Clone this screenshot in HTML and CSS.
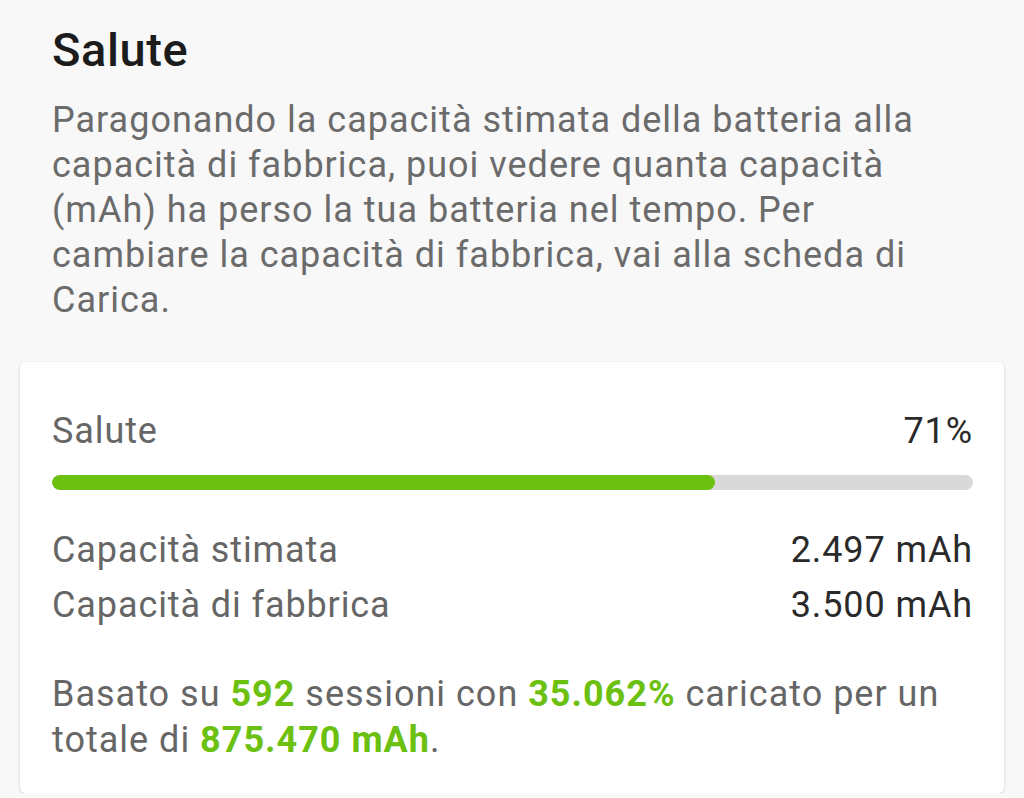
FILE: index.html
```html
<!DOCTYPE html>
<html>
  <head>
    <meta charset="UTF-8" />
    <title>Salute</title>
    <link rel="stylesheet" href="styles.css">
  </head>
  <body>
    <div class="intro">
      <h1>Salute</h1>
      <p>Paragonando la capacità stimata della batteria alla capacità di fabbrica, puoi vedere quanta capacità (mAh) ha perso la tua batteria nel tempo. Per cambiare la capacità di fabbrica, vai alla scheda di Carica.</p>
    </div>

    <div class="card">
      <div class="row head">
        <span class="label">Salute</span>
        <span class="value">71%</span>
      </div>
      <div class="bar">
        <div class="fill" style="width: 72%"></div>
      </div>
      <div class="rows">
        <div class="row">
          <span class="label">Capacità stimata</span>
          <span class="value">2.497 mAh</span>
        </div>
        <div class="row">
          <span class="label">Capacità di fabbrica</span>
          <span class="value">3.500 mAh</span>
        </div>
      </div>
      <p class="note">Basato su <b>592</b> sessioni con <b>35.062%</b> caricato per un totale di <b>875.470 mAh</b>.</p>
    </div>
  </body>
</html>
```

FILE: styles.css
```css
body {
  margin: 0;
  background-color: #f8f8f8;
  font-family: Roboto, "Noto Sans", sans-serif;
  color: #666;
}

.intro {
  padding: 22px 52px 0 52px;
}

.intro h1 {
  margin: 0;
  font-size: 47px;
  font-weight: 500;
  letter-spacing: 0.6px;
  color: #1c1c1c;
  line-height: 56px;
}

.intro p {
  margin: 20px 0 0 0;
  font-size: 36px;
  letter-spacing: 1px;
  line-height: 45px;
  color: #6b6b6b;
}

.card {
  margin: 39px 20px 0 20px;
  background-color: #fff;
  border-radius: 5px;
  box-shadow: 0 1px 3px rgba(0, 0, 0, 0.18);
  padding: 44px 31px 30px 32px;
}

.row {
  display: flex;
  justify-content: space-between;
  font-size: 36px;
  letter-spacing: 0.9px;
  line-height: 55px;
}

.row .value {
  color: #2a2a2a;
}

.head {
  line-height: 50px;
}

.bar {
  margin-top: 19px;
  height: 15px;
  border-radius: 8px;
  background-color: #d9d9d9;
  overflow: hidden;
}

.bar .fill {
  height: 100%;
  border-radius: 8px;
  background-color: #6cc010;
}

.rows {
  margin-top: 33px;
}

.note {
  margin: 38px 0 0 0;
  font-size: 36px;
  letter-spacing: 1px;
  line-height: 46px;
}

.note b {
  color: #6cc010;
  font-weight: 700;
}
```
